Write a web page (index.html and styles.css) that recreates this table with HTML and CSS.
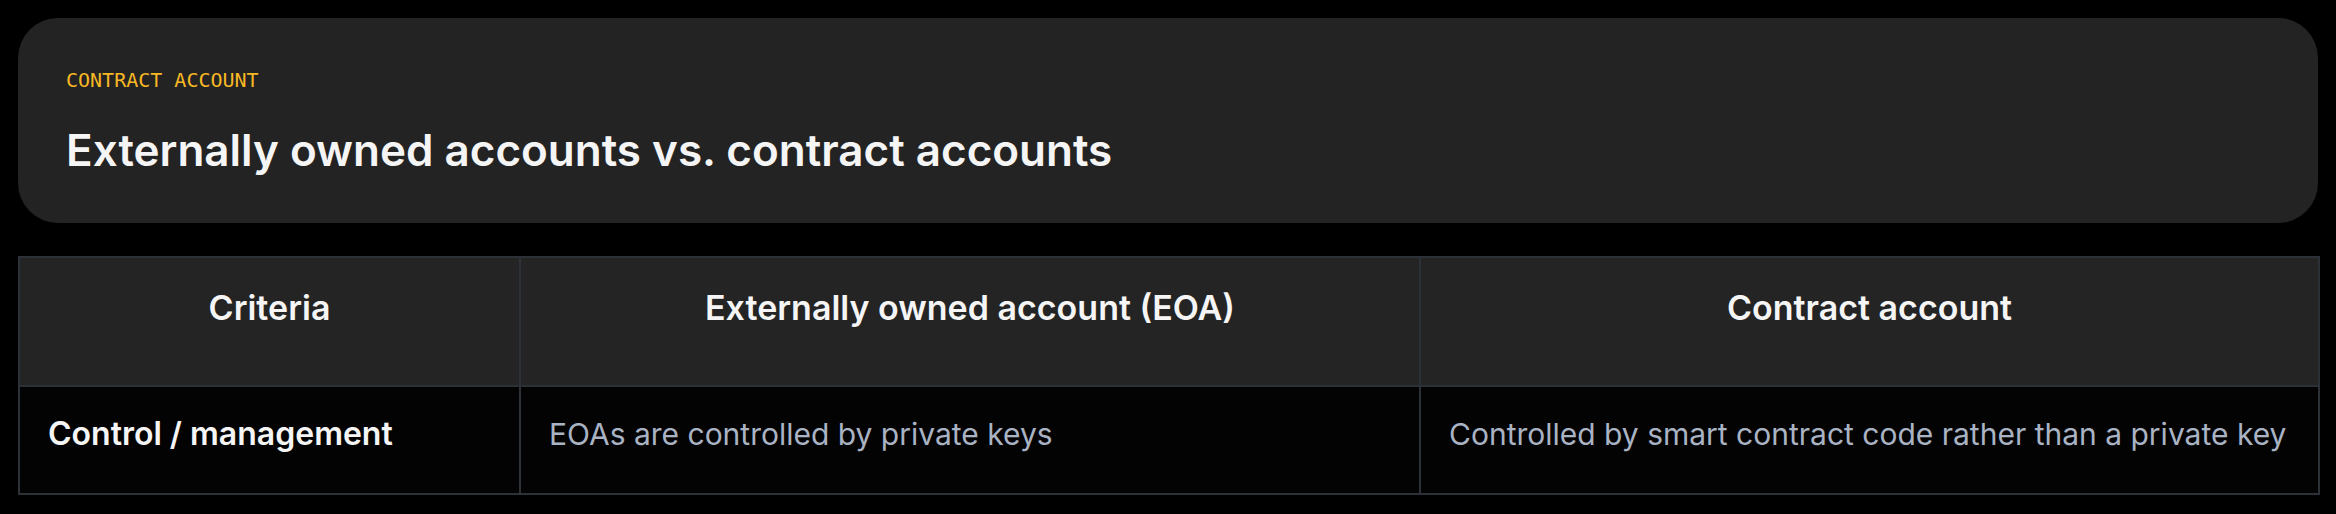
FILE: index.html
```html
<!DOCTYPE html>
<html lang="en">
<head>
<meta charset="utf-8">
<title>Externally owned accounts vs. contract accounts</title>
<link rel="stylesheet" href="styles.css">
</head>
<body>
<main class="page">
  <section class="hero">
    <div class="eyebrow">CONTRACT ACCOUNT</div>
    <h1 class="title">Externally owned accounts vs. contract accounts</h1>
  </section>
  <table class="compare">
    <colgroup>
      <col class="col-criteria">
      <col class="col-eoa">
      <col class="col-contract">
    </colgroup>
    <thead>
      <tr>
        <th>Criteria</th>
        <th>Externally owned account (EOA)</th>
        <th>Contract account</th>
      </tr>
    </thead>
    <tbody>
      <tr>
        <td class="label">Control / management</td>
        <td>EOAs are controlled by private keys</td>
        <td>Controlled by smart contract code rather than a private key</td>
      </tr>
    </tbody>
  </table>
</main>
</body>
</html>
```
FILE: styles.css
```css
* { box-sizing: border-box; }
html, body {
  margin: 0;
  background: #000;
}
body {
  font-family: Inter, "Noto Sans", sans-serif;
  color: #f5f5f5;
}
.page {
  padding: 18px;
}
.hero {
  background: #232323;
  border-radius: 40px;
  padding: 48px 48px 46px;
}
.eyebrow {
  font-family: "DejaVu Sans Mono", "Liberation Mono", monospace;
  font-size: 20px;
  line-height: 28px;
  color: #f7b824;
}
.title {
  margin: 30px 0 0;
  font-size: 44px;
  line-height: 53px;
  font-weight: 600;
  color: #f5f5f5;
}
.compare {
  margin-top: 33px;
  width: 100%;
  border-collapse: collapse;
  table-layout: fixed;
}
.col-criteria { width: 501px; }
.col-eoa { width: 900px; }
.col-contract { width: 899px; }
.compare th,
.compare td {
  border: 2px solid #2c3137;
  padding-left: 28px;
  padding-right: 28px;
}
.compare th {
  background: #242424;
  font-size: 34px;
  line-height: 40px;
  font-weight: 600;
  text-align: center;
  padding-top: 30px;
  padding-bottom: 57px;
  color: #f5f5f5;
}
.compare td {
  background: #030303;
  font-size: 30px;
  line-height: 40px;
  font-weight: 400;
  color: #a9b3c3;
  padding-top: 27px;
  padding-bottom: 39px;
  white-space: nowrap;
}
.compare td.label {
  color: #f5f5f5;
  font-weight: 600;
  font-size: 32px;
}
```
